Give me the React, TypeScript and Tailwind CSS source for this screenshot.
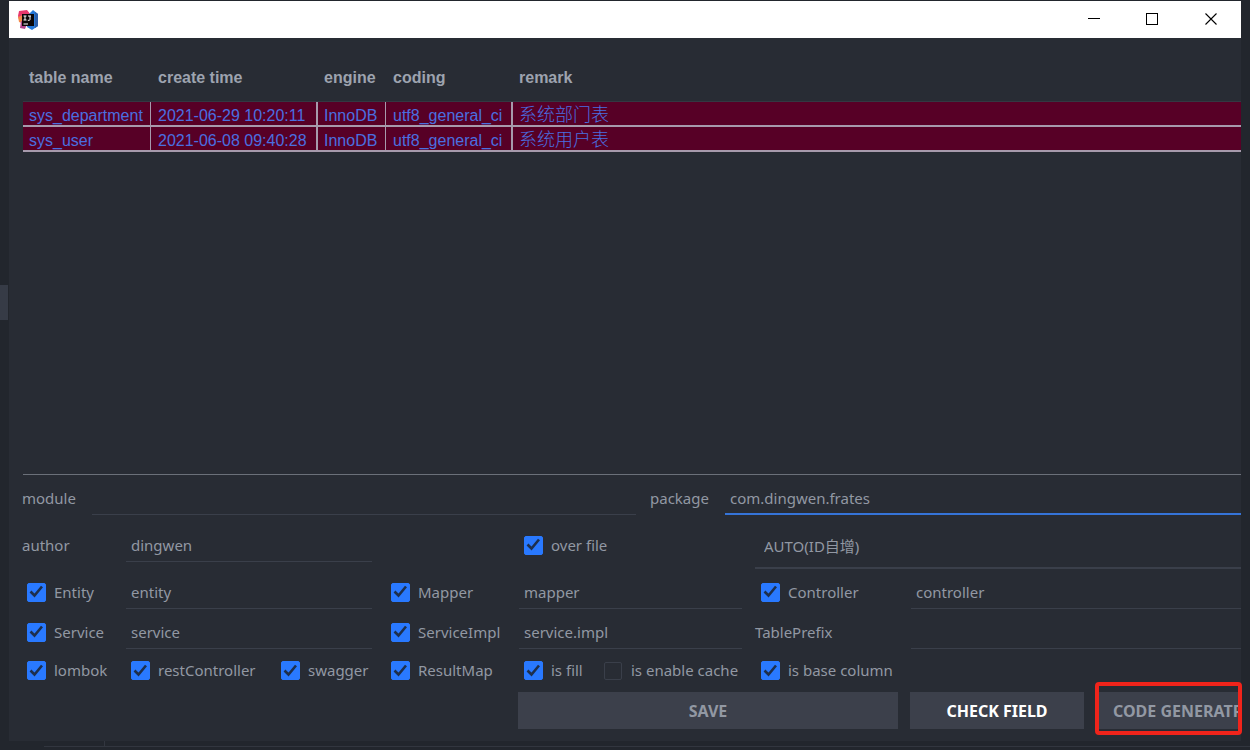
import { useId, type ReactNode } from "react";
import clsx from "clsx";

interface TableRow {
  name: string;
  createTime: string;
  engine: string;
  coding: string;
  remark: string;
}

const COLUMNS = [
  { label: "table name", width: "w-[128px]" },
  { label: "create time", width: "w-[167px]" },
  { label: "engine", width: "w-[68px]" },
  { label: "coding", width: "w-[127px]" },
  { label: "remark", width: "" },
];

const ROWS: TableRow[] = [
  { name: "sys_department", createTime: "2021-06-29 10:20:11", engine: "InnoDB", coding: "utf8_general_ci", remark: "系统部门表" },
  { name: "sys_user", createTime: "2021-06-08 09:40:28", engine: "InnoDB", coding: "utf8_general_ci", remark: "系统用户表" },
];

function IdeaLogo() {
  return (
    <svg viewBox="0 0 20 20" className="h-5 w-5" aria-hidden="true">
      <path d="M1 1 L9 0 L13 5 L10 10 L2 12 L0 6 Z" fill="#e8386d" />
      <path d="M0 7 L5 5 L6 14 L1 12 Z" fill="#f58a4b" />
      <path d="M3 11 L9 14 L7 19 L2 18 Z" fill="#b3478f" />
      <path d="M11 4 L15 0 L20 4 L20 16 L14 20 L9 17 Z" fill="#2478d8" />
      <path d="M17 2 L20 4 L20 16 L17 18 Z" fill="#2d5fa8" />
      <rect x="4" y="4" width="12" height="12" fill="#0b0708" />
      <path d="M5.5 6h3M7 6v4M5.5 10h3M10 6h3M12 6v3.5q0 .8-.8.8h-1.4" stroke="#fff" strokeWidth="1" fill="none" />
      <path d="M5.5 14h4.5" stroke="#fff" strokeWidth="1" />
    </svg>
  );
}

function TitleBar() {
  const button = "flex w-[59px] items-center justify-center text-black";
  return (
    <header className="flex h-[37px] items-stretch bg-white">
      <div className="flex flex-1 items-center pl-[9px]">
        <IdeaLogo />
      </div>
      <button type="button" aria-label="Minimize" className={button}>
        <svg width="12" height="13" shapeRendering="crispEdges"><path d="M0 5.5h12" stroke="currentColor" /></svg>
      </button>
      <button type="button" aria-label="Maximize" className={button}>
        <svg width="13" height="13" fill="none" shapeRendering="crispEdges"><rect x="0.5" y="0.5" width="11" height="11" stroke="currentColor" /></svg>
      </button>
      <button type="button" aria-label="Close" className={button}>
        <svg width="13" height="13"><path d="M0.5 0.5l11 11M11.5 0.5l-11 11" stroke="currentColor" strokeWidth="1.1" /></svg>
      </button>
    </header>
  );
}

function TablesList() {
  return (
    <table className="w-full table-fixed border-separate border-spacing-0 font-['Liberation_Sans','Noto_Sans_CJK_SC',sans-serif] text-base">
      <thead>
        <tr className="h-12 text-left text-[#9da3af]">
          {COLUMNS.map((col) => (
            <th key={col.label} className={clsx("border-b border-[#333842] pl-[6px] font-bold even:pl-[7px]", col.width)}>
              {col.label}
            </th>
          ))}
        </tr>
      </thead>
      <tbody>
        {ROWS.map((row) => (
          <tr
            key={row.name}
            className="h-[25px] bg-[#570026] leading-[19px] whitespace-nowrap text-[#4a6fe0] *:border-b-2 *:border-[#a79aac] *:pt-1 *:pl-[6px] *:even:pl-[7px]"
          >
            <td className="border-r">{row.name}</td>
            <td className="border-r-2">{row.createTime}</td>
            <td className="border-r">{row.engine}</td>
            <td className="border-r-2">{row.coding}</td>
            <td className="text-lg leading-[19px] font-light">{row.remark}</td>
          </tr>
        ))}
      </tbody>
    </table>
  );
}

interface CheckProps {
  label: string;
  checked?: boolean;
  className?: string;
}

function Check({ label, checked = true, className }: CheckProps) {
  return (
    <label className={clsx("flex items-center gap-2 pl-1 whitespace-nowrap", className)}>
      <span className="grid h-5 w-5 shrink-0 place-items-center">
        <input
          type="checkbox"
          defaultChecked={checked}
          className="peer col-start-1 row-start-1 h-[18px] w-[18px] appearance-none rounded-xs border border-[#3a3f4a] checked:h-[19px] checked:w-[19px] checked:border-[#2979ff] checked:bg-[#2979ff]"
        />
        <svg viewBox="0 0 20 20" className="pointer-events-none col-start-1 row-start-1 hidden h-5 w-5 peer-checked:block" aria-hidden="true">
          <path d="M4.5 9.5 L8.5 13.5 L16 4.5" fill="none" stroke="#1d2f4d" strokeWidth="2.6" />
        </svg>
      </span>
      {label}
    </label>
  );
}

interface FieldProps {
  id?: string;
  label?: string;
  value?: string;
  focused?: boolean;
  className?: string;
}

function Field({ id, label, value = "", focused, className }: FieldProps) {
  return (
    <input
      id={id}
      aria-label={label}
      type="text"
      defaultValue={value}
      className={clsx(
        "h-10 w-full min-w-0 bg-transparent pl-[5px] outline-none",
        focused ? "border-b-2 border-[#3574d8] pt-2" : "border-b border-[#3a3f4a] pt-[6px]",
        className,
      )}
    />
  );
}

function FormRow({ children, className }: { children: ReactNode; className?: string }) {
  return (
    <div className={clsx("grid grid-cols-[104px_246fr_147px_223fr_169px_330fr]", className)}>
      {children}
    </div>
  );
}

const ACTION = "h-[37px] overflow-hidden bg-[#3c404b] text-base font-bold whitespace-nowrap";

function GeneratorForm() {
  const id = useId();
  return (
    <form className="pl-[13px] font-['Noto_Sans','Noto_Sans_CJK_SC',sans-serif] text-[15px] text-[#9298a3]">
      <div className="flex">
        <label htmlFor={id + "module"} className="flex h-10 w-[70px] items-center pt-[6px]">module</label>
        <div className="flex-[544]"><Field id={id + "module"} /></div>
        <label htmlFor={id + "package"} className="flex h-10 w-[89px] items-center pt-[6px] pl-[14px]">package</label>
        <div className="flex-[516]"><Field id={id + "package"} value="com.dingwen.frates" focused /></div>
      </div>

      <FormRow className="h-[54px]">
        <label htmlFor={id + "author"} className="flex h-full items-center pt-[6px]">author</label>
        <Field id={id + "author"} value="dingwen" className="mt-[7px]" />
        <Check label="over file" className="col-start-4 pt-[6px]" />
        <select
          aria-label="id type"
          className="col-span-2 ml-[13px] appearance-none border-b-2 border-[#3a3f4a] bg-transparent pt-[10px] pl-[9px] outline-none"
        >
          <option>AUTO(ID自增)</option>
        </select>
      </FormRow>

      <FormRow>
        <Check label="Entity" className="pt-[6px]" />
        <Field label="Entity package" value="entity" />
        <Check label="Mapper" className="ml-[14px] pt-[6px]" />
        <Field label="Mapper package" value="mapper" />
        <Check label="Controller" className="ml-[14px] pt-[6px]" />
        <Field label="Controller package" value="controller" />
      </FormRow>

      <FormRow>
        <Check label="Service" className="pt-[6px]" />
        <Field label="Service package" value="service" />
        <Check label="ServiceImpl" className="ml-[14px] pt-[6px]" />
        <Field label="ServiceImpl package" value="service.impl" />
        <label htmlFor={id + "prefix"} className="flex items-center pt-[6px] pl-[13px]">TablePrefix</label>
        <Field id={id + "prefix"} />
      </FormRow>

      <FormRow className="h-[43px]">
        <div className="col-span-2 flex">
          <Check label="lombok" className="w-[104px]" />
          <Check label="restController" className="w-[150px]" />
          <Check label="swagger" />
        </div>
        <Check label="ResultMap" className="ml-[14px]" />
        <div className="flex">
          <Check label="is fill" className="w-20" />
          <Check label="is enable cache" checked={false} />
        </div>
        <Check label="is base column" className="col-span-2 ml-[14px]" />
      </FormRow>

      <div className="grid grid-cols-[484fr_380fr_174px_145px] gap-3 pb-3">
        <button type="button" className={clsx(ACTION, "col-start-2")}>SAVE</button>
        <button type="button" className={clsx(ACTION, "text-white")}>CHECK FIELD</button>
        <div className="relative">
          <button type="button" className={clsx(ACTION, "w-full pl-[17px] text-left")}>CODE GENERATR</button>
          <span className="pointer-events-none absolute -top-[10px] -right-px -bottom-[6px] -left-px rounded-sm border-4 border-[#f0241b]" />
        </div>
      </div>
    </form>
  );
}

export default function App() {
  return (
    <div className="flex min-h-screen flex-col bg-[#22262d] pt-px">
      <div className="flex flex-1">
        <div className="w-[9px] pt-[284px]">
          <div className="h-[35px] w-2 bg-[#363b46]" />
        </div>
        <main className="flex min-w-0 flex-1 flex-col bg-[#282c34]">
          <TitleBar />
          <section className="ml-[14px] flex-1 border-b border-[#6b7079] pt-4">
            <TablesList />
          </section>
          <GeneratorForm />
        </main>
        <div className="w-[9px]" />
      </div>
      <div className="flex h-[9px] items-start pl-[44px]">
        <div className="h-[6px] w-[61px] border-r border-b border-[#32363f]" />
        <div className="h-[6px] flex-1 border-b border-[#32363f]" />
      </div>
    </div>
  );
}
